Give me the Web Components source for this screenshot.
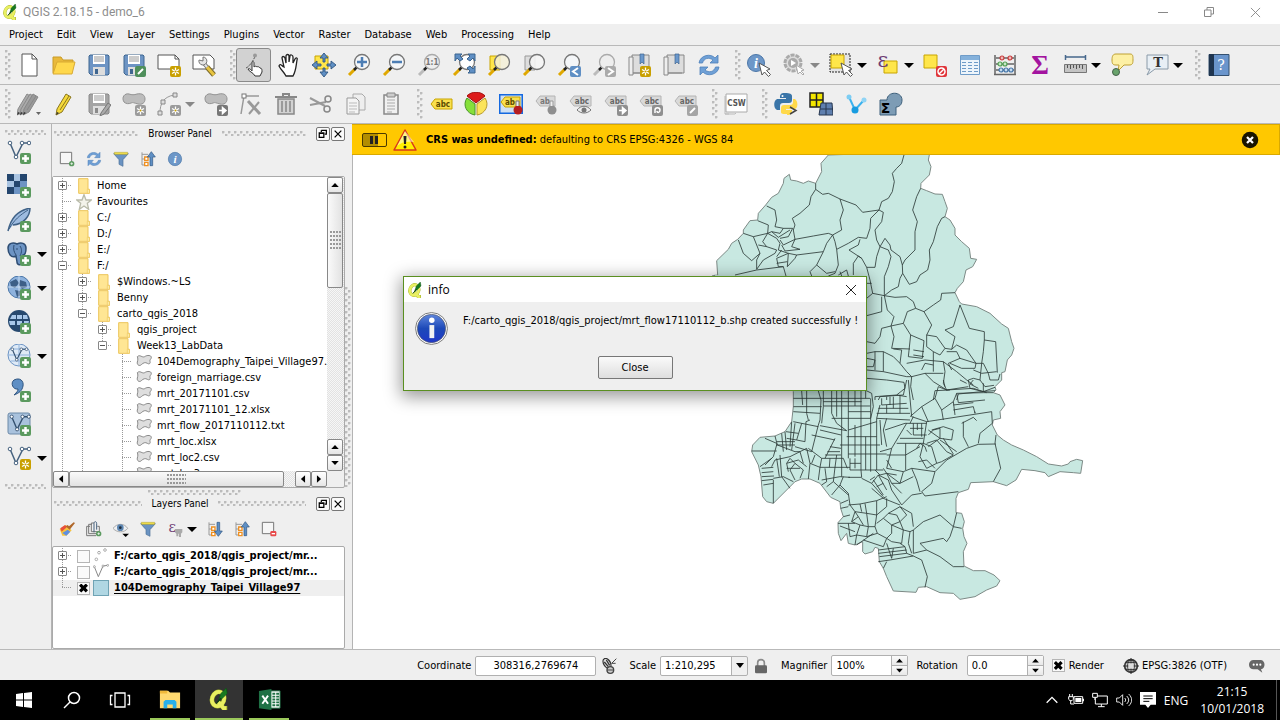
<!DOCTYPE html>
<html lang="en">
<head>
<meta charset="utf-8">
<title>QGIS 2.18.15 - demo_6</title>
<style>
html,body{margin:0;height:100%}
body{font:11px/16px "DejaVu Sans Condensed","Noto Sans",sans-serif;color:#000;background:#efefef;overflow:hidden}
</style>
</head>
<body>
<gis-app></gis-app>
<script>
/* ---------- icon library ---------- */
const badge=(bg,inner)=>`<rect x="13" y="13" width="11" height="11" rx="2" fill="${bg}"/>${inner}`;
const plus=badge('#5b9a5f','<path d="M18.500 15v7M15 18.500h7" stroke="#fff" stroke-width="2.500"/>');
const sunP='<path d="M18.500 14.500v8M15 16.500l7 4M22 16.500l-7 4" stroke="#fff" stroke-width="1.300"/><circle cx="18.500" cy="18.500" r="1" fill="#c9a000"/>';
const gold=badge('#c9a000',sunP), grey=badge('#9b9b9b',sunP);
const goR=c=>badge(c,'<path d="M15 18.500h4M18.500 15.500l3.500 3-3.500 3z" stroke="#fff" stroke-width="1.500" fill="#fff"/>');
const lens=(f='#f4f6f8',c='#777',h='#e0a800')=>`<path d="M2 22l6-6" stroke="${h}" stroke-width="3"/><path d="M7 17l3-3" stroke="#222" stroke-width="2.500"/><circle cx="15" cy="9" r="7.500" fill="${f}" stroke="${c}" stroke-width="1.300"/>`;
const cursor='<path d="M12 10l3 12 2.500-3 4 4.500 2-2-4-4 3.500-1.500z" fill="#fff" stroke="#555" stroke-width="1"/>';
const tag=(f,s,t,c)=>`<path d="M2 12l4-5h17v10H6z" fill="${f}" stroke="${s}"/><text x="14" y="15" font-family="DejaVu Sans Condensed,DejaVu Sans" font-size="8" font-weight="bold" text-anchor="middle" fill="${c}">${t}</text>`;
const gtag=t=>`<g transform="translate(-1 -3)">${tag('#d9d9d9','#b4b4b4',t,'#666')}</g>`;
const vee=(c='#46627f')=>`<path d="M3 3l6 14 7-14h6" fill="none" stroke="${c}" stroke-width="1.500"/><g fill="#fff" stroke="${c}"><circle cx="3" cy="3" r="1.800"/><circle cx="9" cy="17" r="1.800"/><circle cx="15" cy="3" r="1.800"/><circle cx="22" cy="3" r="1.800"/></g>`;
const refresh='<path d="M2 10C3 2 14 0 18 5l3-3v8h-8l3-3C12 4 7 5 5.500 10z" fill="#6fa0d6" stroke="#4f81ba" stroke-width=".8"/><path d="M22 14c-1 8-12 10-16 5l-3 3v-8h8l-3 3c4 3 9 2 10.500-3z" fill="#6fa0d6" stroke="#4f81ba" stroke-width=".8"/>';
const blob=(f='#bcbcbc',s='#939393')=>`<path d="M2 10C-1 5 3 1 7 2c3 1 5 1 8 0 5-1 8 1 8 5s-3 6-7 5-5-2-7-1-5 1-7-1z" fill="${f}" stroke="${s}"/>`;
const floppy=(a,b)=>`<path d="M3 2h18l1 1v18l-1 1H4l-2-2V3z" fill="${a}" stroke="${b}"/><path d="M6 2h12v9H6z" fill="#fff"/><path d="M7 4h10M7 6h10M7 8h10" stroke="#999"/><path d="M6 14h12v8H6z" fill="#ddd"/><path d="M8 16h3v5H8z" fill="${b}"/>`;
const folderTall='<path d="M4 1h14v16h2v6H4z" fill="#ffe694" stroke="#edc55b" stroke-width="1.500"/><path d="M17 17h3v6h-3z" fill="#fff0b0" stroke="#edc55b"/>';
const pencil=(a,b,dx=0)=>`<path d="M${5+dx} 17L${14+dx} 2l5 3-9 15-6 3z" fill="${a}" stroke="${b}"/><path d="M${8+dx} 18l9-14" stroke="${b}"/><path d="M${4+dx} 23l1-3 2 1z" fill="#333"/>`;
const qlogo='<g fill="none" stroke="#a6b52c" stroke-width="5"><ellipse cx="11" cy="12" rx="6.500" ry="8" transform="rotate(20 11 12)"/><path d="M11 15l6 7h4"/></g><g fill="none" stroke="#e9ef62" stroke-width="4"><ellipse cx="11" cy="12" rx="6.500" ry="8" transform="rotate(20 11 12)"/><path d="M11 15l6 7h3"/></g><path d="M11 15l3-9 6-6 1 6-5 5z" fill="#187a20" stroke="#0d4f14" stroke-width=".6"/><path d="M9 17l5-6" stroke="#123f14" stroke-width="1.500"/>';
const treeI='<path d="M3 2v19h5M3 5h9M3 12h6" stroke="#999" fill="none" stroke-width="1.500"/><path d="M7 9h5v5H7zM7 17h5v5H7z" fill="#fff" stroke="#f09020" stroke-width="2"/>';
const bmBase='<path d="M5 2h17v18H5z" fill="#ddd" stroke="#888"/><path d="M2 4h4v18H2zM6 20h14" fill="#eee" stroke="#888"/><path d="M13 1h4v10l-2-2-2 2z" fill="#6b98cc" stroke="#3f6690" stroke-width=".7"/>';
const ICONS={
 qlogo,
 newdoc:'<path d="M5 1h10l5 5v17H5z" fill="#fff" stroke="#555"/><path d="M15 1v5h5" fill="none" stroke="#555"/>',
 open:'<path d="M1 20V4h8l2 3h10v3" fill="#e9b93b" stroke="#c99b27"/><path d="M1 21L5 9h18l-3 12z" fill="#ffd84c" stroke="#d9aa32"/>',
 save:floppy('#6d94c4','#3f6690'),
 saveas:floppy('#6d94c4','#3f6690')+badge('#4f8f5b','<path d="M16 21l5-5" stroke="#fff" stroke-width="2"/>'),
 layout:'<path d="M1 2h17l4 4v10H1z" fill="#fff" stroke="#555"/><path d="M18 2v4h4" fill="none" stroke="#555"/>'+gold,
 manage:'<path d="M1 2h17l4 4v10H1z" fill="#fff" stroke="#555"/><path d="M15 14l7 8" stroke="#7b6a2a" stroke-width="5"/><path d="M15 14l7 8" stroke="#e8c440" stroke-width="3"/><path d="M10 8l5 6" stroke="#777" stroke-width="4"/><path d="M10 8l5 6" stroke="#e4e4e4" stroke-width="2"/><path d="M7 7a4 4 0 1 0 4-3v4z" fill="#e4e4e4" stroke="#777"/>',
 touch:'<path d="M13 23c-2-4-6-4-7-7 2-1 3 1 4 2V10c0-2 2-2 2 0v4c1-1 2-1 3 0 1-1 2 0 3 1 2 0 2 2 2 4l-2 4z" fill="#fff" stroke="#333"/><path d="M4 15c3-1 8-8 9-12" fill="none" stroke="#555" stroke-dasharray="3 1"/><circle cx="13" cy="2.500" r="2" fill="#999"/>',
 hand:'<path d="M9 23c-2-4-5-6-7-10 1-3 3 0 5 1L5 5c0-2 2-2 3 0l1 5V3c0-2 3-2 3 0v6l1-6c0-2 3-1 3 1v6l2-4c1-2 3-1 2 1-1 6-1 11-4 16z" fill="#fff" stroke="#222" stroke-width="1.300"/>',
 pansel:'<path d="M3 3h13v13H3z" fill="#ffe64a" stroke="#c8a400"/><path d="M12 0l4 5h-3v4h-2V5H8zM12 24l4-5h-3v-4h-2v4H8zM0 12l5-4v3h4v2H5v3zM24 12l-5-4v3h-4v2h4v3z" fill="#5f8fc4" stroke="#2f5580" stroke-width=".9"/>',
 zin:lens()+'<path d="M15 4v10M10 9h10" stroke="#4c7db4" stroke-width="2.500"/>',
 zout:lens()+'<path d="M10 9h10" stroke="#4c7db4" stroke-width="2.500"/>',
 z11:lens('#eee','#aaa','#bbb')+'<text x="15" y="12" font-family="DejaVu Sans Condensed,DejaVu Sans" font-size="8" font-weight="bold" text-anchor="middle" fill="#777">1:1</text>',
 zfull:lens('#fff')+'<path d="M3 1h7l-2 2 3 3-3 2-3-3-2 3zM23 1h-7l2 2-3 3 3 2 3-3 2 3zM23 20h-7l2-2-3-3 3-2 3 3 2-3z" fill="#5f8fc4" stroke="#3b648f"/>',
 zsel:'<path d="M3 3h10v14H3z" fill="#ffe64a" stroke="#c8a400"/>'+lens('rgba(245,240,215,.85)'),
 zlay:'<path d="M3 3h10v14H3z" fill="#ddd" stroke="#999"/>'+lens('rgba(245,245,245,.9)'),
 zlast:lens()+badge('#5f8fc4','<path d="M21 15l-5 3.500 5 3.500" fill="none" stroke="#fff" stroke-width="2"/>'),
 znext:lens('#eee','#aaa','#bbb')+badge('#aaa','<path d="M16 15l5 3.500-5 3.500" fill="none" stroke="#fff" stroke-width="2"/>'),
 bmnew:bmBase+gold, bm:bmBase, refresh,
 ident:'<circle cx="9" cy="10" r="8.500" fill="#6d97c8" stroke="#4c77a8"/><text x="9" y="15" font-family="Liberation Serif" font-style="italic" font-weight="bold" font-size="14" text-anchor="middle" fill="#fff">i</text>'+cursor,
 action:'<circle cx="11" cy="10" r="8" fill="#ddd" stroke="#aaa" stroke-width="3" stroke-dasharray="4 1"/><circle cx="11" cy="10" r="5" fill="#aaa"/><path d="M9 7l5 3-5 3z" fill="#fff"/><path d="M14 12l2 9 2-2 3 3 1-1-3-3 3-1z" fill="#fff" stroke="#aaa"/>',
 select:'<path d="M1 1h20v18H1z" fill="#e4e4e4" stroke="#222" stroke-dasharray="2 1"/><path d="M2 2h13v13H2z" fill="#ffe64a" stroke="#c8a400"/>'+cursor,
 expr:'<path d="M8 8h13v12H8z" fill="#ffe64a" stroke="#c8a400"/><text x="7" y="14" font-family="DejaVu Serif" font-size="21" text-anchor="middle" fill="#6d3c74">ε</text>',
 desel:'<path d="M1 2h13v13H1z" fill="#ffe64a" stroke="#c8a400"/>'+badge('#e0353a','<circle cx="18.500" cy="18.500" r="3.500" fill="none" stroke="#fff" stroke-width="1.500"/><path d="M16 21l5-5" stroke="#fff" stroke-width="1.500"/>'),
 table:'<path d="M2.500 2.500h19v19h-19z" fill="#eef5fb" stroke="#6f9cc8"/><path d="M3 3h18v4H3z" fill="#84b1db"/><path d="M4 9.500h4M4 12.500h4M4 15.500h4M4 18.500h4M10 9.500h4M10 12.500h4M10 15.500h4M10 18.500h4M16 9.500h4M16 12.500h4M16 15.500h4M16 18.500h4" stroke="#6f9cc8"/>',
 abacus:'<path d="M2 2v19M22 2v19M1 21.500h22M3 5h18M3 11h18M3 17h18" stroke="#666" stroke-width="1.500"/><g stroke-width="1.200"><g fill="#f3b8b8" stroke="#c83c3c"><circle cx="9" cy="5" r="2"/><circle cx="17" cy="5" r="2"/></g><g fill="#c6e8c6" stroke="#55a055"><circle cx="7" cy="11" r="2"/><circle cx="12" cy="11" r="2"/></g><g fill="#c6dcf0" stroke="#4878aa"><circle cx="8" cy="17" r="2"/><circle cx="13" cy="17" r="2"/><circle cx="18" cy="17" r="2"/></g></g>',
 sigma:'<text x="12" y="21" font-family="Liberation Serif" font-size="27" font-weight="bold" text-anchor="middle" fill="#a3149f">Σ</text>',
 ruler:'<path d="M2 4h21M2.500 2v5M22.500 2v5" stroke="#47688c" stroke-width="1.500"/><path d="M1.500 11.500h22v8h-22z" fill="#c4c4c4" stroke="#777"/><path d="M4.500 12v3M7.500 12v4M10.500 12v3M13.500 12v4M16.500 12v3M19.500 12v4" stroke="#555"/>',
 tip:'<path d="M6 1h14c3 0 3 2 3 6s-1 5-4 5h-5l-6 6 1-6H6c-3 0-4-1-4-5s1-6 4-6z" fill="#fdf0a4" stroke="#bea033"/><circle cx="6" cy="19" r="3.500" fill="#69a36c" stroke="#44604a"/>',
 anno:'<path d="M2 2h21v14H10l-8 6 3-6H2z" fill="#e8eff5" stroke="#8a9aa8"/><text x="13" y="14" font-family="DejaVu Serif" font-weight="bold" font-size="13" text-anchor="middle" fill="#333">T</text>',
 help:'<path d="M2 1.500h20v21H2z" fill="#6a95cc" stroke="#34506f"/><path d="M2 1h5v22H2z" fill="#1f3550"/><text x="14" y="17" font-family="DejaVu Serif" font-size="14" text-anchor="middle" fill="#fff">?</text>',
 pencils:pencil('#aaa','#8a8a8a',-4)+pencil('#aaa','#8a8a8a',-1)+pencil('#999','#888',2)+'<path d="M19 20h5l-2.500 3z" fill="#666"/>',
 pencil:pencil('#f5d93a','#8a7620'),
 savee:floppy('#a4a4a4','#8a8a8a')+'<path d="M14 21l7-10 3 2-7 9-4 2z" fill="#aaa" stroke="#777"/>',
 addf:blob()+grey, movef:blob()+goR('#777'),
 curve:'<path d="M3 21C3 12 6 5 17 3" fill="none" stroke="#999"/><path d="M1 19h4v4H1zM4 8h4v4H4zM16 1h4v4h-4z" fill="#ddd" stroke="#888"/>'+grey,
 node:'<path d="M5 4L2 22M6 4h14" stroke="#999" stroke-width="1.500"/><path d="M9 9l12 13" stroke="#999" stroke-width="3"/><path d="M20 10L10 22" stroke="#999" stroke-width="2"/><rect x="3" y="2" width="4" height="4" fill="#fff" stroke="#777"/>',
 trash:'<path d="M4 7h16v15H4z" fill="#d2d2d2" stroke="#888" stroke-width="1.500"/><path d="M1 5h22M9 5V2h6v3" fill="none" stroke="#888" stroke-width="2"/><path d="M8 9v11M12 9v11M16 9v11" stroke="#888" stroke-width="1.500"/>',
 cut:'<path d="M1 6l15 8M1 13l16-3" stroke="#999" stroke-width="2"/><circle cx="19" cy="7" r="3" fill="none" stroke="#888" stroke-width="1.500"/><circle cx="18" cy="17" r="3" fill="none" stroke="#888" stroke-width="1.500"/>',
 copy:'<path d="M9 2h9l3 3v13H9z" fill="#eee" stroke="#aaa"/><path d="M3 6h9l3 3v13H3z" fill="#f4f4f4" stroke="#999"/><path d="M5 11h8M5 14h8M5 17h8M5 20h6" stroke="#bbb"/>',
 paste:'<path d="M5 3h14v19H5z" fill="#f0f0f0" stroke="#888" stroke-width="1.500"/><path d="M8 1h8v4H8z" fill="#ccc" stroke="#888"/><path d="M8 8h8M8 11h8M8 14h8M8 17h8M8 20h5" stroke="#aaa"/>',
 abc:tag('#f9e04f','#c8a400','abc','#5b4a00'),
 pie:'<path d="M12 11L3 4C7-1 17-1 21 4z" fill="#dd1c1c" stroke="#a01010"/><path d="M11 12v11C3 22-2 13 3 6z" fill="#86e03a" stroke="#49922a"/><path d="M13 12v11c8-1 13-10 8-17z" fill="#fbe45a" stroke="#b89a2a"/>',
 pinhi:'<path d="M.75 2.750h22.500v18.500H.75z" fill="#cfe0f3" stroke="#1569e0" stroke-width="1.500"/><path d="M2 10l4-5h15v10H6z" fill="#f9e04f" stroke="#c8a400"/><text x="11" y="13" font-family="DejaVu Sans Condensed,DejaVu Sans" font-size="8" font-weight="bold" text-anchor="middle" fill="#5b4a00">ab</text><circle cx="19" cy="18" r="4.500" fill="#b51e22"/><path d="M17 14V9h3v5" fill="#eee" stroke="#777"/>',
 pinl:'<path d="M2 9l4-5h15v10H6z" fill="#d9d9d9" stroke="#b4b4b4"/><text x="11" y="12" font-family="DejaVu Sans Condensed,DejaVu Sans" font-size="8" font-weight="bold" text-anchor="middle" fill="#777">ab</text><circle cx="18" cy="18" r="4.500" fill="#8f8f8f"/><path d="M16 14V9h3v5" fill="#eee" stroke="#999"/>',
 eyel:gtag('abc')+'<path d="M8 18c4-5 10-5 14 0-4 4-10 4-14 0z" fill="#eee" stroke="#777"/><circle cx="15" cy="18" r="2.500" fill="#777"/>',
 movl:gtag('abc')+goR('#8f8f8f'),
 rotl:gtag('abc')+badge('#8f8f8f','<path d="M16 21v-3c0-3 5-3 5 0s-3 3-3 1" fill="none" stroke="#fff" stroke-width="1.500"/>'),
 edl:gtag('abc')+badge('#a5a5a5','<path d="M16 21l5-5" stroke="#fff" stroke-width="2"/>'),
 csw:'<path d="M1 4v18h4M1 22h10l1-1" fill="#eee" stroke="#bbb"/><path d="M2 2h21v18H2z" fill="#fff" stroke="#aaa"/><text x="12.500" y="14" font-family="DejaVu Sans Condensed,DejaVu Sans" font-size="8" font-weight="bold" text-anchor="middle" fill="#555">CSW</text>',
 python:'<path d="M11 1c-5 0-5 2-5 5h6v1H4c-5 0-5 11 0 11h2v-4c0-2 1-3 3-3h6c2 0 3-1 3-3V4c0-2-2-3-7-3z" fill="#3a75a8"/><path d="M13 23c5 0 5-2 5-5h-6v-1h8c5 0 4-10 0-10h-1v3c0 2-1 3-3 3h-6c-2 0-3 1-3 3v4c0 2 2 2 6 2z" fill="#ffd94a"/><circle cx="8.500" cy="4" r="1" fill="#fff"/><path d="M16 15l6 3.500-6 3.500" fill="none" stroke="#444" stroke-width="1.500"/>',
 grid:'<path d="M1 1h13v14H1z" fill="#f2e500" stroke="#222" stroke-width="1.500"/><path d="M7.500 1v14M1 8h13" stroke="#222" stroke-width="1.500"/><path d="M12 11h11l1 12H10z" fill="#5f7fae" stroke="#26364e"/><path d="M17 11v12M11 17h12" stroke="#26364e"/>',
 net:'<path d="M5 5l6 13 9-10" fill="none" stroke="#3ab2ee" stroke-width="2"/><circle cx="5" cy="5" r="2.500" fill="#7dcdf3"/><circle cx="11" cy="18" r="3.500" fill="#189ce0"/><circle cx="20" cy="8" r="2.500" fill="#8fd4f5"/>',
 group:'<path d="M1 8h7c0-9 15-9 15 0 0 5-3 7-6 7v8H1z" fill="#7d9cb5" stroke="#3f617c"/><text x="6.500" y="21" font-family="DejaVu Sans" font-size="14" font-weight="bold" text-anchor="middle">Σ</text>',
 vec:vee()+plus, vecnew:vee()+gold,
 raster:'<path d="M0 0h20v20H0z" fill="#6d94c4"/><path d="M0 0h7v7H0zM13 0h7v7h-7zM7 7h6v6H7zM0 13h7v7H0z" fill="#24466e"/><path d="M7 0h6v7H7zM0 7h7v6H0z" fill="#a9c4e2"/>'+plus,
 feather:'<path d="M1 23C4 10 10 3 23 0c0 8-6 16-17 17" fill="#9dbbe0" stroke="#3f6186" stroke-width="1.500"/><path d="M2 21C7 12 13 7 21 2" fill="none" stroke="#3f6186"/>'+plus,
 pg:'<path d="M1 6c0-5 5-6 9-4 4-2 9-1 9 4 0 4-1 7-3 7l-1 8c-1 3-5 2-5-1l-1-6c-5 3-8-3-8-8z" fill="#6d94c4" stroke="#2e4d73" stroke-width="1.500"/><path d="M7 3c-1 4 0 7 2 10M13 4c2 3 2 6 0 10M9 7h2" fill="none" stroke="#2e4d73"/>'+plus,
 globe1:'<circle cx="12" cy="11" r="11" fill="#8eb2dd" stroke="#4c77a8"/><path d="M3 6l6-3 3 4-4 5-4-2zM13 4l6 2 1 5-5 2-3-4zM8 14l5 1 1 4-4 2z" fill="#3d5f87"/><path d="M12 0v22M1 11h22" stroke="#dce9f6" stroke-width=".7"/>'+plus,
 globe2:'<circle cx="12" cy="11" r="11" fill="#27496f"/><path d="M5 5h4v4H3zM10 5h5v4h-5zM16 5h4l1 4h-5zM2 11h6v4H3zM10 11h5v4h-5zM17 11h5l-1 4h-4z" fill="#a9c8ea"/>'+plus,
 globe3:'<circle cx="12" cy="11" r="11" fill="#dfeaf6" stroke="#6d94c4"/><path d="M1 11h22M12 0v22M3 5h18M4 17h16" stroke="#8fb2dc"/><g transform="translate(3 3) scale(.75)">'+vee('#34506f')+'</g>'+plus,
 comma:'<path d="M7 2c6-3 10 1 9 6-1 5-4 7-9 9 3-3 4-4 4-6-5 1-8-6-4-9z" fill="#5f8fc4" stroke="#2f5580"/>'+plus,
 virt:'<rect x="1" y="1" width="22" height="21" rx="2" fill="#a9c2dd" stroke="#6d8aa8"/><g transform="translate(2 2) scale(.9)">'+vee('#34506f')+'</g>'+plus,
 addl:'<path d="M2 2h17v17H2z" fill="#f6f6f6" stroke="#777" stroke-width="1.500"/><circle cx="19" cy="19" r="4" fill="#5b9a5f"/><path d="M19 17v4M17 19h4" stroke="#fff"/>',
 reml:'<path d="M2 2h17v17H2z" fill="#f6f6f6" stroke="#777" stroke-width="1.500"/><rect x="14" y="15" width="9" height="8" rx="2" fill="#e84a4a"/><path d="M16 19h5" stroke="#fff" stroke-width="2"/>',
 funnel:'<path d="M1 4h22l-8 9v10l-6-3v-7z" fill="#6a93c2" stroke="#4d7197"/><path d="M2 2h20v3H2z" fill="#f3e04a" stroke="#a99b26" stroke-width=".7"/>',
 coll:treeI+'<path d="M17 1l6 8h-4v13h-4V9h-4z" fill="#5f8fc4" stroke="#2f5580"/>',
 expd:treeI+'<path d="M17 23l6-8h-4V2h-4v13h-4z" fill="#5f8fc4" stroke="#2f5580"/>',
 info:'<circle cx="12" cy="12" r="10" fill="#6d97c8" stroke="#4c77a8"/><text x="12" y="18" font-family="Liberation Serif" font-style="italic" font-weight="bold" font-size="17" text-anchor="middle" fill="#fff">i</text>',
 folder:folderTall,
 star:'<path d="M12 1l3 8h8l-6 5 2 9-7-5-7 5 2-9-6-5h8z" fill="#f3f3ea" stroke="#b9bbaa" stroke-width="2"/>',
 poly:'<path d="M2 4c4-4 7 2 11 0 4-3 10-2 10 1s-3 3-2 6-1 5-4 3-6-1-9 2-7 0-6-4 1-5 0-8z" fill="#dedede" stroke="#888" stroke-width="1.500"/>',
 brush:'<path d="M1 12l9-6 9 8-8 8H5z" fill="#f8c43c"/><path d="M2 11l7-5 3 3-8 7z" fill="#e8503c"/><path d="M5 18l8-5 4 3-6 6z" fill="#5f8fe0"/><path d="M10 8l6 5 8-10-2-1-7 6-2-2z" fill="#b0672a"/>',
 addg:'<path d="M6 8H1v14h14M9 5H4v14h14M12 3H8v13h12V8h-3" fill="none" stroke="#777" stroke-width="1.500"/><path d="M12 17V4c0-4 4-4 4 0v9" fill="none" stroke="#46627f" stroke-width="1.500"/><circle cx="19" cy="19" r="4" fill="#5b9a5f"/><path d="M19 17v4M17 19h4" stroke="#fff"/>',
 eye:'<path d="M0 11C6 3 17 3 22 11 17 18 6 18 0 11z" fill="#eef0f2" stroke="#888"/><circle cx="11" cy="10" r="5" fill="#5d86b2"/><circle cx="11" cy="10" r="2" fill="#1d2c3c"/><path d="M14 19h10l-5 5z"/>',
 epsf:'<text x="8" y="16" font-family="DejaVu Serif" font-size="22" text-anchor="middle" fill="#6d3c74">ε</text><path d="M12 12h11v5l-2 2v5h-3v-5h-1v4h-3v-4l-2-2z" fill="#aaa"/>',
 dots:'<g fill="#fff" stroke="#888"><circle cx="9" cy="7" r="2"/><circle cx="18" cy="3" r="2"/><circle cx="5" cy="17" r="2"/></g>',
 line:'<path d="M2 4l6 15 7-16 7-1" fill="none" stroke="#888" stroke-width="1.500"/><g fill="#fff" stroke="#888"><circle cx="2" cy="4" r="1.500"/><circle cx="15" cy="3" r="1.500"/><circle cx="22" cy="2" r="1.500"/></g>',
 fill:'<path d="M0 0h24v24H0z" fill="#b0d7e3" stroke="#6fa3b4" stroke-width="3"/>',
 warn:'<path d="M12 2l11 20H1z" fill="#fff100" stroke="#d8371c" stroke-width="1.500" stroke-linejoin="round"/><path d="M12 3l9 11c-7-1-13 0-17 4z" fill="#fff" opacity=".5"/><path d="M10.500 8h3L13 16h-2z" fill="#222"/><circle cx="12" cy="19" r="1.500" fill="#222"/>',
 closex:'<circle cx="12" cy="12" r="11" fill="#1a1500"/><path d="M8 8l8 8M16 8l-8 8" stroke="#fff" stroke-width="3"/>',
 bigi:'<defs><linearGradient id="g" x2="0" y2="1"><stop stop-color="#5f86dc"/><stop offset=".5" stop-color="#1d49b8"/><stop offset="1" stop-color="#2038c8"/></linearGradient></defs><circle cx="12" cy="12" r="11.600" fill="#fff" stroke="#777" stroke-width=".7"/><circle cx="12" cy="12" r="10.300" fill="url(#g)" stroke="#555" stroke-width=".4"/><circle cx="12.200" cy="6" r="2" fill="#fff"/><path d="M10.500 9.500h3.500v9.500h-3.500z" fill="#f2f2f2"/>',
 mouse:'<ellipse cx="9" cy="8" rx="5" ry="8" transform="rotate(-30 9 8)" fill="#ddd" stroke="#333" stroke-width="2"/><path d="M5 6l6 7M8 3l5 8" stroke="#333" stroke-width="2"/><circle cx="14" cy="18" r="5" fill="#ccc" stroke="#444" stroke-width="2"/><path d="M23 1l-7 7h6M9 18l10 0" fill="none" stroke="#444" stroke-width="1.500"/>',
 lock:'<path d="M7 12V7c0-6 10-6 10 0v5" fill="none" stroke="#8b8b8b" stroke-width="2.500"/><rect x="3" y="11" width="18" height="12" rx="2" fill="#666"/>',
 crs:'<circle cx="12" cy="12" r="9.500" fill="#ccc" stroke="#333" stroke-width="2.500"/><ellipse cx="12" cy="12" rx="5" ry="9" fill="none" stroke="#333" stroke-width="1.500"/><path d="M0 12h24M12 0v24M4 7h16M4 17h16" stroke="#333" stroke-width="1.500"/><path d="M8 8h8v8H8z" fill="#ddd"/>',
 chat:'<path d="M6 3h12c7 1 7 13 0 14l2 5-7-5H6C-2 16-2 4 6 3z" fill="#666"/><g fill="#fff"><circle cx="7" cy="10" r="1.600"/><circle cx="12" cy="10" r="1.600"/><circle cx="17" cy="10" r="1.600"/></g>',
 win:'<path d="M4 6l7-1v6.500H4zM12 5l8-1v7.500h-8zM4 12.500h7V19l-7-1zM12 12.500h8V20l-8-1z" fill="#fff"/>',
 search:'<circle cx="14" cy="10" r="5.500" fill="none" stroke="#fff" stroke-width="1.500"/><path d="M10 14l-6 6" stroke="#fff" stroke-width="1.500"/>',
 tview:'<path d="M7 5h10v14H7zM4.500 7.500h-2v9h2M19.500 7.500h2v9h-2" fill="none" stroke="#fff" stroke-width="1.300"/>',
 explorer:'<path d="M1 3h9l2 2h11v17H1z" fill="#ffd970"/><path d="M1 3h8v3H1z" fill="#f0b93a"/><path d="M5 22v-7l2-2h10l2 2v7h-4v-4H9v4z" fill="#29b0ea"/>',
 excel:'<path d="M13 3h10v18H13z" fill="#fff" stroke="#1f7145"/><path d="M15 6h3M19 6h3M15 9h3M19 9h3M15 12h3M19 12h3M15 15h3M19 15h3M15 18h3M19 18h3" stroke="#1f7145" stroke-width="2"/><path d="M1 3l13-2v22L1 21z" fill="#1f7145"/><path d="M4.500 8l6 8.500M10.500 8l-6 8.500" stroke="#fff" stroke-width="2"/>',
 chev:'<path d="M4 16l8-8 8 8" fill="none" stroke="#fff" stroke-width="2"/>',
 batt:'<path d="M9 7h13v10H9z" fill="none" stroke="#fff" stroke-width="1.500"/><path d="M11 9h9v6h-9zM22 10h2v4h-2z" fill="#fff"/><path d="M1 7h7v4L6 13H3l-2-2zM4 13v5h5M2.500 3v4M6.500 3v4" fill="#000" stroke="#fff" stroke-width="1.500"/>',
 lan:'<path d="M5 6h18v12H5zM14 18v4M9 22h10" fill="none" stroke="#fff" stroke-width="1.500"/><path d="M1 2h7v6H1z" fill="#000" stroke="#fff" stroke-width="1.500"/><path d="M4 8v4" stroke="#fff"/>',
 vol:'<path d="M1 9h4l5-5v16l-5-5H1z" fill="none" stroke="#fff" stroke-width="1.300"/><path d="M13 9c2 2 2 4 0 6M16 6c4 4 4 8 0 12M19 3c6 6 6 12 0 18" fill="none" stroke="#fff" stroke-width="1.300"/>',
 note:'<path d="M0 0h24v19h-8l-4 5-4-5H0z" fill="#fff"/><path d="M5 6h14M5 10h14M5 14h9" stroke="#000" stroke-width="1.500"/>',
 float:'<path d="M8 3h12v9h-4M8 3v4" fill="none" stroke="#000" stroke-width="3"/><path d="M3 9h11v11H3zM3 10.500h11" fill="none" stroke="#000" stroke-width="3"/>',
 x:'<path d="M4 4l16 16M20 4L4 20" stroke="#000" stroke-width="3"/>',
 minw:'<path d="M2 13h20" stroke="#888" stroke-width="2"/>',
 maxw:'<path d="M3 8h13v13H3zM8 8V3h13v13h-5" fill="none" stroke="#888" stroke-width="2"/>',
 xw:'<path d="M2 2l20 20M22 2L2 22" stroke="#888" stroke-width="2"/>',
 xd:'<path d="M2 2l20 20M22 2L2 22" stroke="#222" stroke-width="2"/>',
 up:'<path d="M3 17l9-10 9 10z"/>',down:'<path d="M3 7l9 10 9-10z"/>',left:'<path d="M17 3L7 12l10 9z"/>',right:'<path d="M7 3l10 9-10 9z"/>'
};

const define=(name,html,setup)=>customElements.define(name,class extends HTMLElement{
  constructor(){
    super();
    const t=document.createElement('template');
    t.innerHTML=typeof html==='function'?'':'<style>*{box-sizing:border-box}</style>'+html;
    this.attachShadow({mode:'open'}).append(t.content.cloneNode(true));
    this.render=typeof html==='function'?html:null;
  }
  connectedCallback(){
    if(this.render)this.shadowRoot.innerHTML='<style>*{box-sizing:border-box}</style>'+this.render(this);
  }
});
const attr=(e,n,d='')=>e.getAttribute(n)??d;

define('gis-icon',e=>{
  const s=attr(e,'size','24');
  return `<style>:host{display:block;flex:none;width:${s}px;height:${s}px}svg{display:block;width:100%;height:100%}</style><svg viewBox="0 0 24 24" aria-hidden="true">${ICONS[attr(e,'name')]}</svg>`;
});

define('tool-button',e=>`<style>
:host{display:block;flex:none;width:35px;height:34px}
button{display:flex;align-items:center;padding:0;border:1px solid transparent;background:none;height:100%;width:100%;font:inherit}
.i{flex:none;width:33px;display:grid;place-items:center}
.a{width:0;border:5px solid transparent;border-top-color:#000;border-bottom:0}
:host([menu]){width:47px}
:host([off]) .a{border-top-color:#888}
:host([active]) button{background:#d2d2d2;border-color:#8a8a8a;border-radius:3px}
:host([panel]){width:27px;height:24px}
:host([panel]) .i{width:25px}
:host([panel][menu]){width:40px}
:host([side]){width:51px;height:34px}
:host([side]) .i{width:36px}
</style><button type="button" aria-label="${attr(e,'icon')}"><span class="i"><gis-icon name="${attr(e,'icon')}" size="${e.hasAttribute('panel')?16:24}"></gis-icon></span>${e.hasAttribute('menu')?'<span class="a"></span>':''}</button>`);

define('drag-grip',`<style>
:host{display:block;flex:none;width:6px;height:30px;
background:radial-gradient(circle at 1px 1px,#bcbcbc 1px,transparent 2px) 0 0/6px 6px,radial-gradient(circle at 1px 1px,#bcbcbc 1px,transparent 2px) 3px 3px/6px 6px}
:host([flat]){width:auto;height:5px;flex:1}
</style>`);

const toolbar=(groups)=>groups.map(g=>`<drag-grip></drag-grip><div class="g">${g.split(' ').map(n=>{
  const m=n.includes('+'),a=n.includes('*'),o=n.includes('-');
  return `<tool-button icon="${n.replace(/[+*-]/g,'')}"${m?' menu':''}${a?' active':''}${o?' off':''}></tool-button>`;}).join('')}</div>`).join('');
const tbStyle='<style>:host{display:flex;align-items:center;height:39px;border-bottom:1px solid #b9b9b9;background:#efefef;padding-left:5px;overflow:hidden}.g{display:flex;margin-right:9px}</style>';
define('main-toolbar',tbStyle+toolbar(['newdoc open save saveas layout manage','touch* hand pansel zin zout z11 zfull zsel zlay zlast znext bmnew bm refresh','ident action+- select+ expr+ desel table abacus sigma ruler+ tip anno+','help']));
define('edit-toolbar',tbStyle+toolbar(['pencils pencil savee addf curve+- movef node trash cut copy paste','abc pie pinhi pinl eyel movl rotl edl','csw','python grid net group']));

define('title-bar',`<style>
:host{display:flex;align-items:center;height:24px;background:#fff;color:#8d8d8d;padding:0 2px;font:12px/16px "Noto Sans","Open Sans",sans-serif}
span{flex:1;padding-left:5px;font-family:Roboto,"Open Sans",sans-serif}
button{width:46px;height:20px;border:0;background:none;display:grid;place-items:center;padding:0}
</style><gis-icon name="qlogo" size="16"></gis-icon><span>QGIS 2.18.15 - demo_6</span>
<button aria-label="minimise"><gis-icon name="minw" size="12"></gis-icon></button><button aria-label="restore"><gis-icon name="maxw" size="12"></gis-icon></button><button aria-label="close"><gis-icon name="xw" size="11"></gis-icon></button>`);

define('menu-bar',`<style>
:host{display:flex;gap:14px;align-items:center;height:22px;padding:0 9px;border-bottom:1px solid #b9b9b9;background:#efefef}
button{border:0;background:none;padding:0;font:inherit;color:inherit}
</style>`+'Project Edit View Layer Settings Plugins Vector Raster Database Web Processing Help'.split(' ').map(t=>`<button type="button">${t}</button>`).join(''));

define('side-toolbar',`<style>
:host{display:flex;flex-direction:column;width:52px;border-right:1px solid #b4b4b4;padding-top:6px}
drag-grip{flex:none;margin:0 5px}
div{padding-bottom:9px}
</style><drag-grip flat></drag-grip><div>`+'vec raster feather pg+ globe1+ globe2 globe3+ comma virt vecnew+'.split(' ').map(n=>`<tool-button side icon="${n.replace('+','')}"${n.includes('+')?' menu':''}></tool-button>`).join('')+'</div><drag-grip flat></drag-grip>');

define('dock-panel',e=>`<style>
:host{display:flex;flex-direction:column;min-height:0}
header{display:flex;align-items:center;height:17px;gap:10px;padding-left:2px;font-size:10px}
h2{margin:0;font:inherit}
.b{display:flex;gap:1px}
.b button{width:14px;height:14px;padding:0;border:1px solid #777;border-radius:2px;background:#fafafa;display:grid;place-items:center}
.t{display:flex;align-items:center;height:34px;padding-left:1px}
</style><header><drag-grip flat></drag-grip><h2>${attr(e,'heading')}</h2><drag-grip flat></drag-grip><div class="b"><button aria-label="float"><gis-icon name="float" size="10"></gis-icon></button><button aria-label="close"><gis-icon name="x" size="10"></gis-icon></button></div></header>
<div class="t">${attr(e,'tools').split(' ').map(n=>`<tool-button panel icon="${n.replace('+','')}"${n.includes('+')?' menu':''}></tool-button>`).join('')}</div><slot></slot>`);

define('tree-row',e=>{
  const g=attr(e,'guides'),ex=attr(e,'expander');
  return `<style>
:host{display:flex;height:16px;align-items:center;white-space:nowrap}
:host([selected]){background:#efefef}
i{flex:none;width:20px;height:16px;background:repeating-linear-gradient(#999 0 1px,transparent 1px 2px) 9px 0/1px 100% no-repeat}
i.n{background:none}
i.e{background:repeating-linear-gradient(#999 0 1px,transparent 1px 2px) 9px 0/1px 100% no-repeat,repeating-linear-gradient(90deg,#999 0 1px,transparent 1px 2px) 9px 7px/10px 1px no-repeat;display:grid;align-content:start;padding:3px 0 0 5px}
i.l{background-size:1px 8px,10px 1px}
b{width:9px;height:9px;border:1px solid #888;border-radius:1px;background:linear-gradient(#555,#555) center/5px 1px no-repeat,#fff}
b.p{background:linear-gradient(#555,#555) center/5px 1px no-repeat,linear-gradient(#555,#555) center/1px 5px no-repeat,#fff}
.c{flex:none;width:24px;padding-left:3px}
::slotted(input){margin:0 0 0 4px}
</style>${[...g].map(c=>`<i class="${c==='|'?'':'n'}"></i>`).join('')}<i class="e${e.hasAttribute('last')?' l':''}">${ex?`<b class="${ex==='+'?'p':''}"></b>`:''}</i><slot name="check"></slot><span class="c"><gis-icon name="${attr(e,'icon')}" size="16"></gis-icon></span><span><slot></slot></span>`;});

define('browser-tree',()=>{
  const rows=[['','+','folder','Home'],['','','star','Favourites'],['','+','folder','C:/'],['','+','folder','D:/'],['','+','folder','E:/'],['','-','folder','F:/'],['|','+','folder','$Windows.~LS'],['|','+','folder','Benny'],['|','-','folder','carto_qgis_2018'],['||','+','folder','qgis_project'],['||','-','folder','Week13_LabData',1],
  ...['104Demography_Taipei_Village97.shp','foreign_marriage.csv','mrt_20171101.csv','mrt_20171101_12.xlsx','mrt_flow_2017110112.txt','mrt_loc.xlsx','mrt_loc2.csv','mrt_loc3.csv'].map(t=>['||.','','poly',t])];
  return `<style>
:host{display:grid;grid-template:minmax(0,1fr) 16px/minmax(0,1fr) 17px;height:312px;border:1px solid #aaa;border-radius:2px;background:#efefef}
.r{overflow:hidden;background:#fff;padding-top:1px}
.v,.h{display:flex;background:repeating-conic-gradient(#e2e2e2 0 25%,#f6f6f6 0 50%) 0 0/2px 2px}
.v{flex-direction:column}
button{flex:none;width:16px;height:16px;padding:0;border:1px solid #888;border-radius:2px;background:linear-gradient(#fff,#e6e6e6);display:grid;place-items:center}
.t{flex:none;border:1px solid #888;border-radius:2px;display:grid;place-items:center;background:linear-gradient(90deg,#fafafa,#e2e2e2)}
.t::after{content:"";width:11px;height:19px;background:radial-gradient(circle at 1px 1px,#999 1px,transparent 1px) 0 0/3px 4px}
.v .t{height:95px;width:16px}.h .t{width:215px;height:16px;background:linear-gradient(#fafafa,#e2e2e2)}.h .t::after{width:19px;height:11px}
.s{flex:1}
</style><div class="r" role="tree">${rows.map(r=>`<tree-row guides="${r[0]}" expander="${r[1]}" icon="${r[2]}"${r[4]?' last':''}>${r[3]}</tree-row>`).join('')}</div>
<div class="v"><button aria-label="up"><gis-icon name="up" size="10"></gis-icon></button><div class="t"></div><div class="s"></div><button aria-label="up"><gis-icon name="up" size="10"></gis-icon></button><button aria-label="down"><gis-icon name="down" size="10"></gis-icon></button></div>
<div class="h"><button aria-label="left"><gis-icon name="left" size="10"></gis-icon></button><div class="t"></div><div class="s"></div><button aria-label="left"><gis-icon name="left" size="10"></gis-icon></button><button aria-label="right"><gis-icon name="right" size="10"></gis-icon></button></div>`;});

const checkCss='input[type=checkbox]{appearance:none;flex:none;display:grid;place-items:center;width:13px;height:13px;border:1px solid #b5b5b5;background:#fafafa}input[type=checkbox]:checked::before{content:"";width:9px;height:9px;background:#000;clip-path:polygon(25% 0,50% 25%,75% 0,100% 25%,75% 50%,100% 75%,75% 100%,50% 75%,25% 100%,0 75%,25% 50%,0 25%)}';
define('layer-tree',`<style>
:host{display:block;flex:1;border:1px solid #aaa;border-radius:2px;background:#fff;font-weight:bold;padding-top:1px;overflow:hidden}
u{text-underline-offset:2px}${checkCss}
</style>
<tree-row expander="+" icon="dots"><input slot="check" type="checkbox" aria-label="Layer 1">F:/carto_qgis_2018/qgis_project/mr...</tree-row>
<tree-row expander="+" icon="line"><input slot="check" type="checkbox" aria-label="Layer 2">F:/carto_qgis_2018/qgis_project/mr...</tree-row>
<tree-row selected last icon="fill"><input slot="check" type="checkbox" aria-label="Layer 3" checked><u>104Demography_Taipei_Village97</u></tree-row>`);

define('message-bar',`<style>
:host{display:flex;align-items:center;height:31px;background:#ffc800;border:1px solid #d9a900;border-width:1px 1px 1px 0;padding:0 20px 0 10px}
.p{width:25px;height:14px;border:1px solid #4a3a00;border-radius:2px;background:linear-gradient(90deg,#b38d00 15px,#ffc800 0)}
.p::after{content:"";display:block;width:2px;height:8px;margin:2px 0 0 7px;border:solid #222;border-width:0 3px}
gis-icon{margin:0 9px 0 6px}
p{flex:1;margin:0}
button{border:0;background:none;padding:0}
button gis-icon{margin:0}
</style><span class="p"></span><gis-icon name="warn" size="24"></gis-icon><p><b>CRS was undefined:</b> defaulting to CRS EPSG:4326 - WGS 84</p><button aria-label="close message"><gis-icon name="closex" size="18"></gis-icon></button>`);

/* Village boundaries of Taipei: north half and south half, each in thirds of a pixel. */
const northEdge='M36 378L53 375 50 332 85 298 95 280 113 268 130 250 130 240 150 212 173 210 175 190 197 165 215 142 235 130 250 100 252 85 268 73 272 90 290 93 310 100 325 93 347 100 365 65 363 40 385 15 690 5 685 30 693 50 688 75 663 100 662 115 680 122 705 132 727 133 735 155 742 175 735 200 750 210 765 235 765 255 785 275 808 295 812 325 830 328 818 350 798 360 790 395 772 415 765 428 778 455 785 462 830 470 870 490 905 522 925 535 935 575 942 595 935 615 922 630 915 665 905 668 905 690 885 710';
const north='M612 15L605 40 590 55 577 70 583 95 577 125 565 145 545 155 537 180 488 187 468 165 420 147 385 130 368 133 347 118V100M347 118L333 140 328 165 300 190 277 205 285 225 280 240 285 268M420 147L430 180 420 210 425 240 398 255 385 250 340 258 285 268 250 285 240 270M398 255L405 275 410 298 415 345 405 370 385 378M410 298L445 280 475 262 500 265 510 235 512 205 537 180 550 187 545 215 525 240 530 270 540 290 530 320 525 352 500 352 485 325 447 300 475 285 480 268M540 290L555 265 570 285 573 300 600 320 607 345 608 370 628 403 650 395 660 375 683 360 690 330 688 300 700 275 712 230 725 205 735 200M662 115L650 140 638 180 652 215 645 245V300L615 330 607 345M540 290L565 300 573 320 565 350 553 380V437L518 430 510 390 500 352M518 430L500 445M553 437L575 420 595 410 600 385 608 370M553 437L585 442 620 440 640 455 647 475 622 485 610 520 573 528 582 500 562 480 553 437M545 440V485L500 497M647 475L672 485 700 465 722 450 725 430 765 428M672 485L695 525 680 555 710 560 735 595 755 598M780 465L760 530 735 540 765 560 755 598 770 585 800 600 828 640M780 465L808 535 853 545V570L850 605 845 640M853 570L887 575 892 668M610 520L632 555 672 572 667 625 625 620 632 555M573 528L582 560 575 595 630 597M573 528L545 535 540 560 525 580 500 575M680 555V590L700 605V665M500 610L525 605H550L580 620 600 640 620 665 635 680 632 710 640 750M525 605V660M550 605V665M500 625L525 630 520 650H500M500 660L550 665 620 680 635 680M580 597L605 600 600 640M620 640L675 630 730 635 770 665 800 690 820 705M730 635L735 665 730 700 740 720M635 680L675 670H730M675 670L700 695 740 720 805 710M665 660L675 640 700 645M640 600L672 605M640 615L672 620M735 595L720 615 700 605M740 605H770L780 625 745 640 755 660M780 625L828 640 825 655H785L750 640M828 640H850M845 640L840 690 820 685 805 690 810 715M845 670L890 665M850 640L865 670 870 690 895 690 900 672M810 715L850 725 885 712M850 700V725M820 660L845 670M500 685L560 690 612 697 615 715 590 735 525 740 525 750M560 740V750M770 750L775 732 845 725 885 722M700 750L705 722 750 720M590 735L620 740M200 168L225 180 230 210 225 230 250 235 240 250 215 245 203 250 205 225 173 212M130 250L160 260 170 285 180 310 155 332 130 310 115 270M203 250L188 275 200 290 175 285M200 290L230 300 225 310 190 330 170 358V330L180 310M203 250L230 265 240 280 235 300M250 235L278 235 265 260 240 265M285 268L275 290 300 298 255 303 245 285M235 300L265 310 290 315 370 305 380 280 398 255M265 310L230 325 235 350 250 350 258 378M265 310L262 350 285 325 290 315M105 375L170 360 250 350M370 305L350 345 380 370 405 365M350 345L330 365 335 378M475 318L460 340V375M415 375L440 360 445 378M420 365L425 378M475 318L485 325M500 400H515M215 245L235 262 270 240M160 260L203 250M230 340L262 335M245 300L230 320';
const southEdge='M160 -6V80L155 125 135 155 105 168 60 172 38 195 35 215 55 255 63 290 68 350 80 365 100 370 140 330 165 305 185 297H210L240 310 272 352 300 365 302 385 310 410 294 428 295 460 303 482 320 460 325 490 345 495 368 485V515L375 522 398 515 405 502 415 505 418 545 430 565 440 590 460 633 528 637 535 622 560 620 600 638 640 640 660 658 705 650 740 630 770 618 780 602 762 585 735 572H700L672 558 670 515 681 490 672 470 668 445 673 425 665 400 648 398V355L655 338 685 328 692 308 760 305 800 317 828 300 845 268 885 272 915 278 925 290 960 275 1000 278 1022 280 1028 242 1010 238 990 245 985 252 965 258 925 252 890 230 850 210 815 195 790 180 772 165 757 135 760 120 782 115 780 95 795 75 780 45 760 38 768 30 765 20';
const south='M235 33L243 60 240 120 235 135M250 33V80L245 130M185 33L188 75M200 33V100L205 120M160 55H390M160 80H245M250 78H390M160 95L240 100M275 115H392M275 33V100L290 130 320 152M290 33V110M305 33V235M325 33V235M345 33V78M345 135V230M363 33V270M377 33V55M377 170V270M392 55V275M410 115V270M250 65H365M325 95H392M325 150L410 125M320 152L240 137M320 170H410M300 195H420M325 222H440M330 235V270M345 235V265M330 270H430M330 250H363M160 125L235 140M210 120L198 125 195 185 170 180 185 130M235 135L215 215 165 200M215 165L285 180M240 150L303 165M285 175L255 235M255 225H303M270 200L303 205M262 215H300M245 235L240 262M270 235L268 262M290 225L285 262M35 213H110M75 175L110 190V195L100 230 75 255M105 168L112 195 165 215M135 155L140 210M155 125L150 200M165 130L155 210M125 160L130 215M138 155L175 160M140 175L170 180M110 195L165 195M110 185L165 185M65 265L100 262M65 278L100 275M65 290L102 288M65 302L100 298M70 315L100 310M100 300V370M95 260L105 240 150 230 200 205M60 260L95 235M100 295L130 290 160 305M120 225L125 290 150 325M110 235L118 290M150 235L165 250 190 270 180 295M140 250L175 240 200 260M140 265H180M150 235L140 250 145 275M165 250L150 270 165 300M200 205L210 250 205 297M180 215L190 250M205 205L245 235 310 235M165 215L180 215M210 250L240 262H330M240 262L235 300M225 225L215 250M255 265L260 305 245 315M285 262L280 305 260 320M245 300L300 290 330 292M305 235V290M310 290L300 315 325 340 330 375M300 315L275 345M280 305L325 345M310 235L322 265M325 292H365L363 270M365 295L395 310 430 350M325 375L360 372 410 362 440 350M330 375L345 395 335 425M302 370L325 360M302 385L325 380M345 395L380 400 375 370M380 400L410 405 440 380V355M310 410L330 405M335 425L360 435 350 465 345 495M294 430L345 430M300 438L345 455M325 430L330 470 350 465M360 435L385 440 380 470 350 465M355 410L370 435M345 395L355 410 335 425M385 440H405L410 405M380 400L385 440M405 440L412 460 440 475 430 500 370 480M410 430L430 415 455 435V460L440 475M430 415L445 400 480 380 515 400 520 440M455 435L490 450 485 490 455 485 440 475M480 380L500 405 480 425 490 450 510 455 505 490 515 520M445 400L470 405 480 425 455 435M350 495L400 460M412 460L380 470M360 372L365 395M410 362V405M395 310L415 285 445 300 455 330 485 375 515 345 545 340M395 325L430 355 480 375M415 285L440 330M400 300L430 345M430 310L410 320M390 300L405 290M455 310L485 340M440 280L480 310 520 290M440 265L490 275 515 265 585 275M515 265L530 300 540 335M490 275L480 310 455 310 440 280 420 285 405 270M430 265L440 280 470 285M585 275L575 310 545 335 555 348 655 335M585 275L620 240 680 205 715 193 768 192M768 165L765 190 782 265 760 305M497 190V270M440 225H497M455 205L500 130M440 265L455 205 420 215M440 240L455 265M470 190H550M540 200L497 225M505 0L515 110M365 25L395 40 400 80 392 115M420 50L490 45 500 0M425 55V75L500 70M415 85H505M410 100L510 100M410 115L510 120M440 75V100M460 50V85M450 50V75M480 45V100M420 75L410 115M440 115L430 150 440 200M420 120L425 195M435 150L495 130H560M415 60L420 50M510 110L545 80 585 55 595 20M545 80L565 125M585 55L605 90 610 120M605 90L640 65 650 40M515 110L560 125 755 95M640 65L645 105M650 40L730 38H760M735 60L655 68 650 40M640 90L700 80 705 100M640 75L700 68M755 95L757 130 720 160 715 190M705 100V95M670 125V170L685 200M665 130L700 112 710 122M595 20L620 30 700 25 740 38M610 0L615 20M700 0L690 12 715 25M720 0L735 20 762 16M660 0L680 10M575 150L610 140 640 150 635 180 600 175V145M560 125L550 190 540 230 560 265 590 250 575 200 550 190M560 190L590 180 620 215 640 225 605 245 590 250M600 180L650 215M610 175L640 222M565 150L600 175 565 200M520 130V165H560M545 130V170M532 130V150M510 145H550M500 150L515 165M480 175H550M510 130L520 110M565 165L580 150 600 145M530 205L540 190 555 200 560 215M535 245L560 240 585 265M520 450L550 425 600 405 640 440 650 398M640 440L665 445M640 440L630 470 620 485 610 475 540 490 560 510 600 530 640 560H672M520 450V520L560 510M415 545L450 540 520 528 545 540 562 590 555 622M415 510L495 500M418 530L500 520M415 520L500 510M430 565L440 545M460 505L455 535M440 490L455 535M510 455L520 450M495 500L500 520 520 528M480 490L495 500';
define('map-canvas',`<style>
:host{display:block;flex:1;min-height:0;overflow:hidden;background:#fff;border-left:1px solid #b4b4b4}
svg{display:block}
.l{fill:none;stroke:#2d3a37;stroke-width:2.500;stroke-linejoin:round}
.e{fill:#c8e8e1;stroke:#7c8a86;stroke-width:3;stroke-linejoin:round}
</style><svg width="927" height="495" viewBox="353 155 927 495" role="img" aria-label="Map">
<g transform="translate(740 380) scale(.33333)"><path class="e" d="${southEdge}"/></g>
<g transform="translate(700 150) scale(.33333)"><path class="e" d="${northEdge}"/></g>
<path d="M714 274L900 340 994 387 794 392z" fill="#c8e8e1"/>
<g transform="translate(700 150) scale(.33333)"><path class="l" d="${north}"/></g>
<g transform="translate(740 380) scale(.33333)"><path class="l" d="${south}"/></g></svg>`);

define('info-dialog',`<style>
:host{display:block;position:absolute;left:calc(50% - 237px);top:276px;width:464px;height:115px;border:1px solid #5a8f20;background:#efefef;box-shadow:0 4px 16px 2px rgba(0,0,0,.4)}
header{display:flex;align-items:center;height:25px;background:#fff;padding:0 9px 0 3px;font:12px/16px "Open Sans","Noto Sans",sans-serif}
header span{flex:1;padding-left:5px}
button{font:inherit;color:inherit;padding:0}
header button{border:0;background:none}
.m{display:flex;gap:15px;padding:10px 0 0 11px;white-space:nowrap}
p{margin:0;padding-top:1px}
.c{display:block;width:75px;height:23px;margin:11px auto 0;border:1px solid #777;border-radius:2px;background:linear-gradient(#fafafa,#dedede)}
</style><header><gis-icon name="qlogo" size="16"></gis-icon><span>info</span><button aria-label="close"><gis-icon name="xd" size="12"></gis-icon></button></header>
<div class="m"><gis-icon name="bigi" size="33"></gis-icon><p>F:/carto_qgis_2018/qgis_project/mrt_flow17110112_b.shp created successfully !</p></div>
<button class="c" type="button">Close</button>`);

define('spin-box',e=>`<style>
:host{display:flex;width:77px;height:21px;border:1px solid #b0b0b0;border-radius:2px;background:#fff}
input{flex:1;min-width:0;border:0;padding:0 4px;font:inherit;background:none}
div{display:grid;width:16px;border-left:1px solid #b0b0b0}
button{padding:0;border:0;background:linear-gradient(#fafafa,#e8e8e8);display:grid;place-items:center;min-height:0}
button + button{border-top:1px solid #b0b0b0}
</style><input aria-label="${attr(e,'label')}" value="${attr(e,'value')}"><div><button aria-label="up"><gis-icon name="up" size="9"></gis-icon></button><button aria-label="down"><gis-icon name="down" size="9"></gis-icon></button></div>`);

define('status-bar',`<style>
:host{display:flex;justify-content:flex-end;align-items:center;height:31px;border-top:1px solid #b9b9b9;padding:1px 15px 0 0;background:#efefef}
label,.x{display:flex;align-items:center}
gis-icon + label{margin-left:12px}
.co{width:121px;height:20px;border:1px solid #b0b0b0;border-radius:2px;text-align:center;font:inherit;margin:0 5px 0 4px;padding:0}
select{appearance:none;width:88px;height:20px;border:1px solid #b0b0b0;border-radius:2px;font:inherit;padding:0 4px;margin:0 5px 0 4px;background:linear-gradient(90deg,#b0b0b0 1px,#f0f0f0 1px) right/16px 100% no-repeat,#fff}
.s{position:relative}
.s::after{content:"";position:absolute;right:9px;border:4px solid transparent;border-top:5px solid #000;border-bottom:0}
spin-box{margin:0 8px 0 4px}
.r spin-box{margin-left:9px}
.k{gap:4px}${checkCss}.k input{margin:0}
.x{margin:0 22px 0 19px;gap:3px}
</style><label>Coordinate<input class="co" value="308316,2769674"></label><gis-icon name="mouse" size="16"></gis-icon>
<label class="s">Scale<select><option>1:210,295</option></select></label><gis-icon name="lock" size="16"></gis-icon>
<label>Magnifier<spin-box label="Magnifier" value="100%"></spin-box></label><label class="r">Rotation<spin-box label="Rotation" value="0.0"></spin-box></label>
<label class="k"><input type="checkbox" checked>Render</label><span class="x"><gis-icon name="crs" size="16"></gis-icon>EPSG:3826 (OTF)</span><gis-icon name="chat" size="16"></gis-icon>`);

define('task-bar',`<style>
:host{display:flex;align-items:stretch;height:40px;background:#000;color:#fff;font:12px/17px "Open Sans","Noto Sans",sans-serif}
button{width:48px;border:0;background:none;padding:0;display:grid;place-items:center}
.o{width:40px;border-bottom:2px solid #9bc95b;margin:0 5px 0 6px}
.q{width:48px;margin:0;background:#333;border-bottom:2px solid #9bc95b}
.t{flex:1;display:flex;justify-content:flex-end;align-items:center;gap:8px;padding-right:12px}
.k{text-align:center;margin-left:4px}
.e{border-right:1px solid #555;width:1px;margin-right:3px}
</style><button aria-label="start"><gis-icon name="win"></gis-icon></button><button aria-label="search"><gis-icon name="search"></gis-icon></button><button aria-label="task view"><gis-icon name="tview"></gis-icon></button>
<button class="o" aria-label="files"><gis-icon name="explorer" size="22"></gis-icon></button><button class="q" aria-label="QGIS"><gis-icon name="qlogo" size="22"></gis-icon></button><button class="o" aria-label="Excel"><gis-icon name="excel" size="23"></gis-icon></button>
<div class="t"><gis-icon name="chev" size="16"></gis-icon><gis-icon name="batt" size="16"></gis-icon><gis-icon name="lan" size="16"></gis-icon><gis-icon name="vol" size="16"></gis-icon><gis-icon name="note" size="16"></gis-icon><span>ENG</span><div class="k">21:15<br>10/01/2018</div></div><div class="e"></div>`);

define('gis-app',`<style>
:host{display:flex;flex-direction:column;height:100vh;position:relative}
.main{flex:1;display:flex;min-height:0}
.docks{display:flex;flex-direction:column;width:293px;padding-top:1px}
.split{width:7px;display:flex;align-items:center}
.split drag-grip{height:200px}
.hs{height:7px;display:flex;padding:2px 104px 0 96px}
.map{flex:1;min-width:0;display:flex;flex-direction:column}
.grow{flex:1}
</style><title-bar></title-bar><menu-bar></menu-bar><main-toolbar></main-toolbar><edit-toolbar></edit-toolbar>
<div class="main"><side-toolbar></side-toolbar>
<div class="docks"><dock-panel heading="Browser Panel" tools="addl refresh funnel coll info"><browser-tree></browser-tree></dock-panel>
<div class="hs"><drag-grip flat></drag-grip></div>
<dock-panel class="grow" heading="Layers Panel" tools="brush addg eye funnel epsf+ expd coll reml"><layer-tree></layer-tree></dock-panel></div>
<div class="split"><drag-grip></drag-grip></div>
<div class="map"><message-bar></message-bar><map-canvas></map-canvas></div></div>
<status-bar></status-bar><task-bar></task-bar><info-dialog></info-dialog>`);
</script>
</body>
</html>
